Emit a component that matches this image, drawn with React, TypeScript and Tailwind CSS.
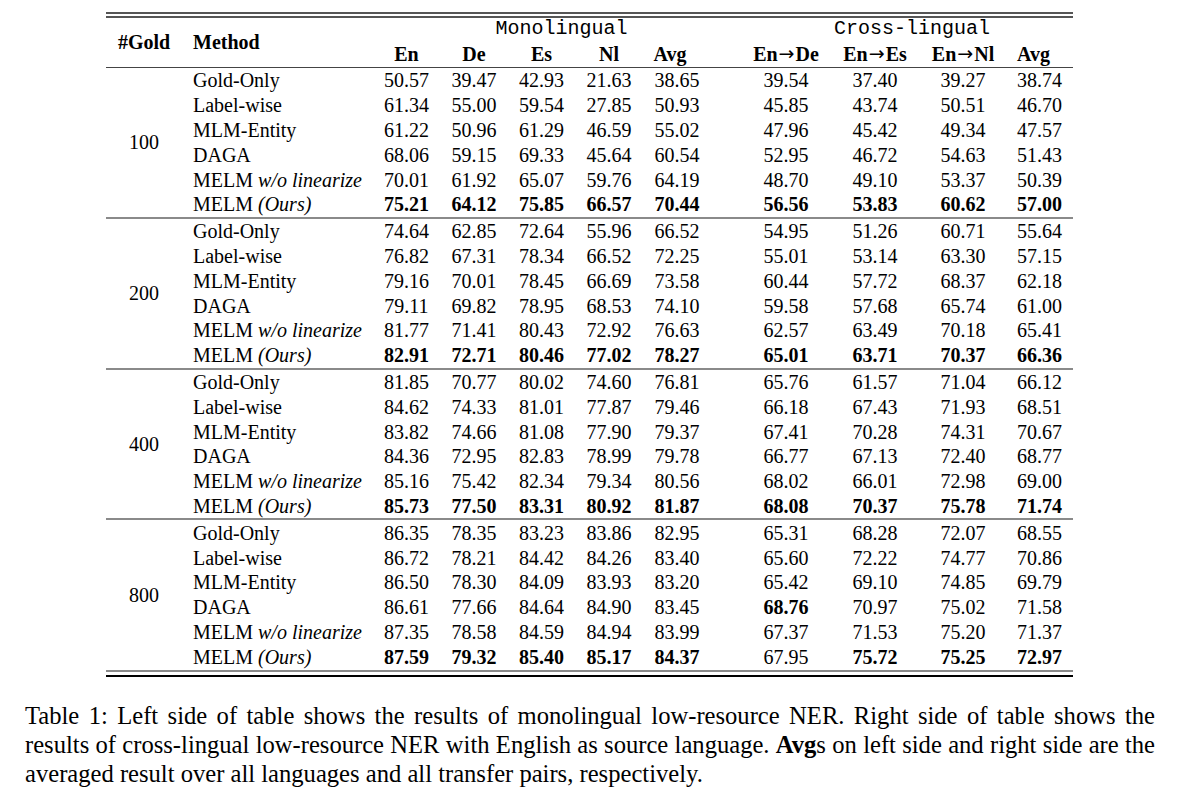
import React from "react";

type Row = { method: React.ReactNode; vals: string[] };
type Group = { gold: string; rows: Row[] };

const serif = "font-['Liberation_Serif','Times_New_Roman',serif]";

const methods: React.ReactNode[] = [
    "Gold-Only",
    "Label-wise",
    "MLM-Entity",
    "DAGA",
    <span>MELM <i>w/o linearize</i></span>,
    <span>MELM <i>(Ours)</i></span>,
];

// "*" marks a bold value
const data: { gold: string; vals: string[][] }[] = [
    {
        gold: "100", vals: [
            ["50.57", "39.47", "42.93", "21.63", "38.65", "39.54", "37.40", "39.27", "38.74"],
            ["61.34", "55.00", "59.54", "27.85", "50.93", "45.85", "43.74", "50.51", "46.70"],
            ["61.22", "50.96", "61.29", "46.59", "55.02", "47.96", "45.42", "49.34", "47.57"],
            ["68.06", "59.15", "69.33", "45.64", "60.54", "52.95", "46.72", "54.63", "51.43"],
            ["70.01", "61.92", "65.07", "59.76", "64.19", "48.70", "49.10", "53.37", "50.39"],
            ["*75.21", "*64.12", "*75.85", "*66.57", "*70.44", "*56.56", "*53.83", "*60.62", "*57.00"],
        ]
    },
    {
        gold: "200", vals: [
            ["74.64", "62.85", "72.64", "55.96", "66.52", "54.95", "51.26", "60.71", "55.64"],
            ["76.82", "67.31", "78.34", "66.52", "72.25", "55.01", "53.14", "63.30", "57.15"],
            ["79.16", "70.01", "78.45", "66.69", "73.58", "60.44", "57.72", "68.37", "62.18"],
            ["79.11", "69.82", "78.95", "68.53", "74.10", "59.58", "57.68", "65.74", "61.00"],
            ["81.77", "71.41", "80.43", "72.92", "76.63", "62.57", "63.49", "70.18", "65.41"],
            ["*82.91", "*72.71", "*80.46", "*77.02", "*78.27", "*65.01", "*63.71", "*70.37", "*66.36"],
        ]
    },
    {
        gold: "400", vals: [
            ["81.85", "70.77", "80.02", "74.60", "76.81", "65.76", "61.57", "71.04", "66.12"],
            ["84.62", "74.33", "81.01", "77.87", "79.46", "66.18", "67.43", "71.93", "68.51"],
            ["83.82", "74.66", "81.08", "77.90", "79.37", "67.41", "70.28", "74.31", "70.67"],
            ["84.36", "72.95", "82.83", "78.99", "79.78", "66.77", "67.13", "72.40", "68.77"],
            ["85.16", "75.42", "82.34", "79.34", "80.56", "68.02", "66.01", "72.98", "69.00"],
            ["*85.73", "*77.50", "*83.31", "*80.92", "*81.87", "*68.08", "*70.37", "*75.78", "*71.74"],
        ]
    },
    {
        gold: "800", vals: [
            ["86.35", "78.35", "83.23", "83.86", "82.95", "65.31", "68.28", "72.07", "68.55"],
            ["86.72", "78.21", "84.42", "84.26", "83.40", "65.60", "72.22", "74.77", "70.86"],
            ["86.50", "78.30", "84.09", "83.93", "83.20", "65.42", "69.10", "74.85", "69.79"],
            ["86.61", "77.66", "84.64", "84.90", "83.45", "*68.76", "70.97", "75.02", "71.58"],
            ["87.35", "78.58", "84.59", "84.94", "83.99", "67.37", "71.53", "75.20", "71.37"],
            ["*87.59", "*79.32", "*85.40", "*85.17", "*84.37", "67.95", "*75.72", "*75.25", "*72.97"],
        ]
    },
];

const groups: Group[] = data.map((g) => ({
    gold: g.gold,
    rows: g.vals.map((v, i) => ({method: methods[i], vals: v})),
}));

const cols = "grid grid-cols-[76px_191px_67px_68px_67px_68px_68px_31px_88px_90px_86px_67px]";

function Cell({v}: { v: string }) {
    const bold = v.startsWith("*");
    return (
        <div className={"flex items-center justify-center " + (bold ? "font-bold" : "")}>
            {bold ? v.slice(1) : v}
        </div>
    );
}

function GroupBlock({group}: { group: Group }) {
    return (
        <div className={cols + " grid-rows-[repeat(6,24.8px)]"}>
            <div className="row-span-6 flex items-center justify-center">{group.gold}</div>
            {group.rows.map((r, i) => (
                <React.Fragment key={i}>
                    <div className="col-start-2 flex items-center pl-[11px] whitespace-nowrap">{r.method}</div>
                    {r.vals.slice(0, 5).map((v, j) => <Cell key={j} v={v}/>)}
                    <div/>
                    {r.vals.slice(5).map((v, j) => <Cell key={j + 5} v={v}/>)}
                </React.Fragment>
            ))}
        </div>
    );
}

function Pair({to}: { to: string }) {
    return (
        <div className="flex items-center justify-center font-bold whitespace-nowrap">
            <span>En</span>
            <span className="font-['DejaVu_Sans',sans-serif] font-normal text-[19px] mx-[1px]">→</span>
            <span>{to}</span>
        </div>
    );
}

export default function App() {
    return (
        <div className={"w-[1188px] h-[808px] bg-white text-black " + serif}>
            <div className="w-[967px] ml-[106px] pt-[12px] text-[20px] leading-none">
                <div className="h-[1.5px] bg-[#555]"/>
                <div className="h-[1.5px] bg-[#555] mt-[2.5px]"/>

                {/* header */}
                <div className={cols + " grid-rows-[23px_26px]"}>
                    <div className="row-span-2 flex items-center justify-center font-bold pb-[1px]">#Gold</div>
                    <div className="row-span-2 flex items-center pl-[11px] font-bold pb-[1px]">Method</div>
                    <div className="col-span-5 flex items-center justify-center pl-[39px] font-['Liberation_Mono','Courier_New',monospace]">
                        Monolingual
                    </div>
                    <div/>
                    <div className="col-span-4 flex items-center justify-center pl-[9px] font-['Liberation_Mono','Courier_New',monospace]">
                        Cross-lingual
                    </div>
                    {["En", "De", "Es", "Nl"].map((h) => (
                        <div key={h} className="flex items-center justify-center font-bold">{h}</div>
                    ))}
                    <div className="flex items-center justify-center font-bold pr-[14px]">Avg</div>
                    <div/>
                    <Pair to="De"/>
                    <Pair to="Es"/>
                    <Pair to="Nl"/>
                    <div className="flex items-center justify-center font-bold pr-[12px]">Avg</div>
                </div>
                <div className="h-[1.5px] bg-[#444]"/>

                {groups.map((g, i) => (
                    <React.Fragment key={g.gold}>
                        {i > 0 && <div className="h-[2px] bg-[#8a8a8a]"/>}
                        <GroupBlock group={g}/>
                    </React.Fragment>
                ))}

                <div className="h-[2px] bg-[#8a8a8a] mt-[1px]"/>
                <div className="h-[1.5px] bg-black mt-[3px]"/>
            </div>

            <div className="w-[1130px] ml-[25px] mt-[24px] text-[24.6px] leading-[29px] text-justify">
                <div className="[text-align-last:justify] whitespace-nowrap">
                    Table 1: Left side of table shows the results of monolingual low-resource NER. Right side of table shows the
                </div>
                <div className="[text-align-last:justify] whitespace-nowrap">
                    results of cross-lingual low-resource NER with English as source language. <b>Avg</b>s on left side and right side are the
                </div>
                <div>averaged result over all languages and all transfer pairs, respectively.</div>
            </div>
        </div>
    );
}
